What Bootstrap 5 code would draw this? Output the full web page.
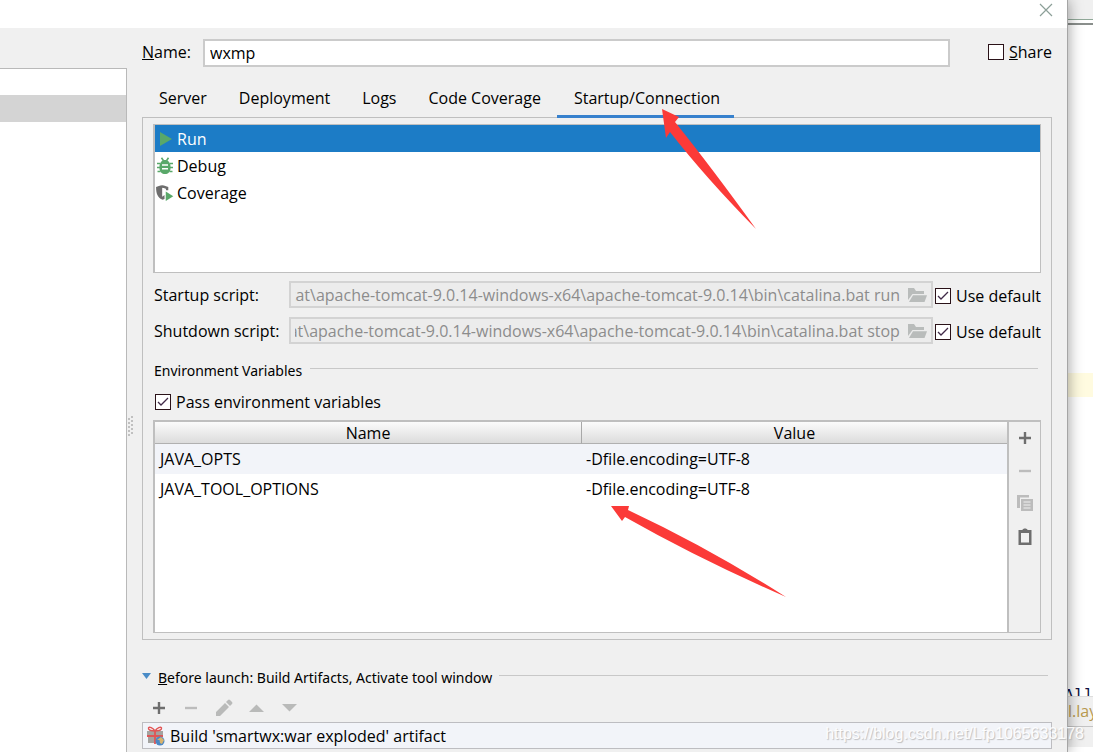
<!DOCTYPE html>
<html lang="en">
<head>
<meta charset="utf-8">
<meta name="viewport" content="width=device-width, initial-scale=1">
<title>Run/Debug Configurations</title>
<link href="https://cdn.jsdelivr.net/npm/bootstrap@5.3.0/dist/css/bootstrap.min.css" rel="stylesheet">
<style>
:root { --face:#f0f0f0; --edge:#bfbfbf; --blue:#1c7cc6; }
body { font-family:"Open Sans","Noto Sans CJK SC",sans-serif; font-size:16px; line-height:20px; color:#000; background:#fff; }
.window { min-height:100vh; overflow:hidden; }
.dialog { background:var(--face); z-index:1; box-shadow:0 0 14px rgba(0,0,0,.4); border-right:1px solid #a5a5a5; }
.titlebar { height:28px; background:#fff; padding-right:14px; }
.close-btn { border:0; background:none; padding:0; height:16px; line-height:1; }
.config-tree { width:127px; margin-top:40px; background:#fff; border:1px solid #b9b9b9; border-width:1px 1px 0 0; padding-top:26px; }
.tree-selected { height:27px; background:#d4d4d4; }
.splitter { width:15px; }
.pane { padding:11px 15px 0 0; min-width:0; }
.name-row { height:28px; }
.name-row label { padding-bottom:2px; }
.label-name { width:61px; }
.field { font-size:16px; line-height:20px; border:2px solid #cbcbcb; border-radius:0; background:#fff; color:#000; height:28px; padding:0 5px; min-width:0; }
.tick { appearance:none; width:16px; height:16px; margin:0; border:1px solid #2a1218; background:#fff; flex:none; }
.tick:checked { background:#fff url("data:image/svg+xml,%3Csvg xmlns='http://www.w3.org/2000/svg' viewBox='0 0 14 14'%3E%3Cpath d='M2 7l3 3 7-7' fill='none' stroke='%23402a48' stroke-width='1.3'/%3E%3C/svg%3E"); }
.share { margin-left:38px; gap:5px; }
.tabs { margin-top:17px; padding-left:1px; }
.tab-item { border:0; background:none; color:#000; padding:4px 16px 7px; height:34px; line-height:20px; border-bottom:3px solid transparent; }
.tab-item.active { border-color:#3781cd; padding:4px 14px 7px 17px; position:relative; }
.panel { border:1px solid var(--edge); margin-top:-1px; padding:6px 10px; }
.runners { background:#fff; border:1px solid var(--edge); border-left-width:2px; height:149px; }
.runner { height:27px; padding-left:2px; gap:4px; border:0; background:none; text-align:left; color:#000; }
.runner.active { background:var(--blue); color:#fff; }
.scripts { margin-top:8px; gap:9px; }
.script-label { width:136px; padding-left:1px; }
.script-box { height:27px; border:2px solid #d3d3d3; background:#ececec; padding-right:4px; min-width:0; }
.script-box input { border:0; background:none; color:#8c8c8c; padding:0; margin-left:4px; min-width:0; font-size:16px; line-height:20px; }
.script-box button, .tool { border:0; background:none; padding:0; line-height:1; }
.default { margin-left:2px; gap:5px; padding-top:2px; }
.section { font-family:"Noto Sans","Open Sans",sans-serif; font-size:14px; line-height:20px; gap:8px; }
.section .rule { border-top:1px solid #c8c8c8; margin-bottom:5px; }
.env-title { margin-top:17px; padding:0 3px 0 1px; }
.pass { margin-top:11px; gap:5px; padding-left:2px; }
.env-box { border:2px solid var(--edge); border-right-width:1px; border-bottom-width:1px; margin-top:8px; height:213px; }
.env-table { width:100%; table-layout:fixed; border-collapse:separate; border-spacing:0; }
.env-table th { height:22px; font-weight:400; text-align:center; background:linear-gradient(#fbfbfb,#dcdcdc); border-bottom:1px solid #b0b0b0; padding:0; line-height:20px; }
.env-table th + th { border-left:1px solid #a8a8a8; }
.env-table td { height:30px; padding:0 5px; }
.env-table tbody tr:first-child { background:#f2f4f9; }
.env-tools { width:33px; border-left:2px solid var(--edge); padding-top:6px; gap:15px; }
.tool { width:18px; height:18px; flex:none; }
.launch-title { margin-top:28px; padding-right:4px; gap:7px; }
.launch-tools { margin-top:10px; gap:15px; padding-left:8px; }
.tasks { margin-top:6px; margin-bottom:2px; border:1px solid #bdbdc1; background:#f2f4f9; height:27px; padding-left:3px; gap:4px; }
.behind { width:25px; background:#fff; }
.behind-bar { height:20px; background:var(--face); border-bottom:1px solid #90a898; }
.behind-line { height:5px; border-bottom:2px solid #8a8f8c; }
.behind-caret { height:24px; margin-top:348px; background:#fffbe0; }
.behind-code { height:10px; margin-top:289px; font:16px/20px "Liberation Mono",monospace; color:#101040; overflow:hidden; }
.behind-crumb { height:31px; background:#f0f0f0; border-top:1px solid #ddd; border-bottom:1px solid #c4c4c4; color:#b8994f; line-height:29px; overflow:hidden; white-space:nowrap; }
.behind-code span { margin-left:-4px; }
.annot { position:absolute; z-index:3; pointer-events:none; }
.annot-a { left:660px; top:108px; }
.annot-b { left:609px; top:505px; }
.watermark { position:absolute; z-index:3; right:9px; bottom:8px; font-family:"Liberation Sans",sans-serif; color:#fff; text-shadow:1px 1px 1px #b5b5b5; opacity:.85; }
</style>
<script src="https://cdn.jsdelivr.net/npm/bootstrap@5.3.0/dist/js/bootstrap.bundle.min.js"></script>
</head>
<body>
<div class="window d-flex position-relative">
  <div class="dialog d-flex flex-column flex-grow-1 position-relative">
    <div class="titlebar d-flex justify-content-end">
      <button class="close-btn" aria-label="Close"><svg width="14" height="14" viewBox="0 0 14 14"><path d="M1 1l12 12M13 1L1 13" stroke="#8c9f98" stroke-width="1.2"/></svg></button>
    </div>
    <div class="d-flex flex-grow-1">
      <aside class="config-tree flex-shrink-0"><div class="tree-selected"></div></aside>
      <div class="splitter flex-shrink-0 d-flex align-items-center">
        <svg class="mt-5 pt-4" width="7" height="44" viewBox="0 0 7 20"><g fill="#c0c0c0"><path d="M1 2h2v2h-2zM1 6h2v2h-2zM1 10h2v2h-2zM1 14h2v2h-2zM1 18h2v2h-2zM4 0h2v2h-2zM4 4h2v2h-2zM4 8h2v2h-2zM4 12h2v2h-2zM4 16h2v2h-2z"/></g></svg>
      </div>
      <main class="pane flex-grow-1">
        <div class="name-row d-flex align-items-center">
          <label class="label-name" for="cfgName"><u>N</u>ame:</label>
          <input class="field flex-grow-1" id="cfgName" type="text" value="wxmp">
          <label class="share d-flex align-items-center"><input class="tick" type="checkbox"><span><u>S</u>hare</span></label>
        </div>
        <div class="tabs d-flex" role="tablist">
          <button class="tab-item" role="tab">Server</button>
          <button class="tab-item" role="tab">Deployment</button>
          <button class="tab-item" role="tab">Logs</button>
          <button class="tab-item" role="tab">Code Coverage</button>
          <button class="tab-item active" role="tab">Startup/Connection</button>
        </div>
        <section class="panel">
          <div class="runners d-flex flex-column">
            <button class="runner active d-flex align-items-center"><svg width="16" height="16" viewBox="0 0 16 16"><path d="M3 1l12 7-12 7z" fill="#59a869"/></svg>Run</button>
            <button class="runner d-flex align-items-center"><svg width="16" height="18" viewBox="0 0 16 18"><g fill="none" stroke="#59a869" stroke-width="1.6"><path d="M4.5 0.8l2 3M11.500 .8l-2 3M0 6.500h3M13 6.500h3M0 10.500h3M13 10.500h3M0.500 14.500h3M12.500 14.500h3"/></g><path d="M8 3c3 0 5.500 2.500 5.500 6.500v2c0 3.500-2.500 5.500-5.500 5.500s-5.500-2-5.500-5.500v-2C2.500 5.500 5 3 8 3z" fill="#59a869"/><path d="M5 8h6M5 11.800h6" stroke="#fff" stroke-width="1.5"/></svg>Debug</button>
            <button class="runner d-flex align-items-center"><svg width="16" height="18" viewBox="1 0 17 18" overflow="visible"><path d="M0 2.500C2 2 4 1 6.500 .8 9 1 11 2 13 2.500V6H10.500V4.500C9 4.500 7.500 4 6.500 3.500V13l2.500-2v4.500L7 16.300C2 13.500 0 10.500 0 2.500z" fill="#6e6e6e"/><path d="M10.300 7.500l8 5-8 5z" fill="#59a869"/></svg>Coverage</button>
          </div>
          <div class="scripts d-flex flex-column">
            <div class="d-flex">
              <label class="script-label pt-1" for="startScript">Startup script:</label>
              <div class="script-box d-flex align-items-center flex-grow-1">
                <input class="flex-grow-1 tail" id="startScript" type="text" disabled value="mcat\apache-tomcat-9.0.14-windows-x64\apache-tomcat-9.0.14\bin\catalina.bat run">
                <button class="ms-2" aria-label="Browse"><svg width="19" height="15" viewBox="0 0 19 15"><path d="M0 0h6l2 3h8v3H4.500L0 12z" fill="#b9bcbb"/><path d="M5 7.300h14L16.500 14H1z" fill="#b9bcbb"/></svg></button>
              </div>
              <label class="default d-flex align-items-center"><input class="tick" type="checkbox" checked><span>Use default</span></label>
            </div>
            <div class="d-flex">
              <label class="script-label pt-1" for="stopScript">Shutdown script:</label>
              <div class="script-box d-flex align-items-center flex-grow-1">
                <input class="flex-grow-1 tail" id="stopScript" type="text" disabled value="cat\apache-tomcat-9.0.14-windows-x64\apache-tomcat-9.0.14\bin\catalina.bat stop">
                <button class="ms-2" aria-label="Browse"><svg width="19" height="15" viewBox="0 0 19 15"><path d="M0 0h6l2 3h8v3H4.500L0 12z" fill="#b9bcbb"/><path d="M5 7.300h14L16.500 14H1z" fill="#b9bcbb"/></svg></button>
              </div>
              <label class="default d-flex align-items-center"><input class="tick" type="checkbox" checked><span>Use default</span></label>
            </div>
          </div>
          <div class="env-title section d-flex align-items-center"><span>Environment Variables</span><span class="rule flex-grow-1"></span></div>
          <label class="pass d-flex align-items-center"><input class="tick" type="checkbox" checked><span>Pass environment variables</span></label>
          <div class="env-box d-flex">
            <div class="flex-grow-1 bg-white">
              <table class="env-table">
                <thead><tr><th>Name</th><th>Value</th></tr></thead>
                <tbody>
                  <tr><td>JAVA_OPTS</td><td>-Dfile.encoding=UTF-8</td></tr>
                  <tr><td>JAVA_TOOL_OPTIONS</td><td>-Dfile.encoding=UTF-8</td></tr>
                </tbody>
              </table>
            </div>
            <div class="env-tools flex-shrink-0 d-flex flex-column align-items-center">
              <button class="tool" aria-label="Add"><svg width="18" height="18" viewBox="0 0 18 18"><path d="M9 3v12M3 9h12" stroke="#6e6e6e" stroke-width="2.400"/></svg></button>
              <button class="tool" aria-label="Remove"><svg width="18" height="18" viewBox="0 0 18 18"><path d="M3 9h12" stroke="#bcbcbc" stroke-width="2.400"/></svg></button>
              <button class="tool" aria-label="Copy"><svg width="18" height="18" viewBox="0 0 18 18"><path d="M1 0h12v2.500H4V13H1z" fill="#bcbcbc"/><path fill-rule="evenodd" d="M5 4h12v12H5zM7.500 6.500v1h7v-1zM7.500 9.500v1h7v-1zM7.500 12.500v1h7v-1z" fill="#bcbcbc"/></svg></button>
              <button class="tool" aria-label="Paste"><svg width="18" height="18" viewBox="0 0 18 18"><path fill-rule="evenodd" d="M2.500 2H6.500C6.500 0 11.500 0 11.500 2H15.500V17H2.500zM5 5V14.500h8V5z" fill="#6e6e6e"/></svg></button>
            </div>
          </div>
        </section>
        <div class="launch-title section d-flex align-items-center"><svg class="mb-1" width="9" height="6" viewBox="0 0 9 6"><path d="M0 0h9L4.500 6z" fill="#4a8cc7"/></svg><span><u>B</u>efore launch: Build Artifacts, Activate tool window</span><span class="rule flex-grow-1"></span></div>
        <div class="launch-tools d-flex">
          <button class="tool" aria-label="Add"><svg width="18" height="18" viewBox="0 0 18 18"><path d="M9 3v12M3 9h12" stroke="#6e6e6e" stroke-width="2.400"/></svg></button>
          <button class="tool" aria-label="Remove"><svg width="18" height="18" viewBox="0 0 18 18"><path d="M2 9h12" stroke="#bcbcbc" stroke-width="2.400"/></svg></button>
          <button class="tool" aria-label="Edit"><svg width="18" height="18" viewBox="0 0 18 18"><path d="M0 17v-4l9-9 4 4-9 9zM10 3l2-2q1-1 2 0l2 2q1 1 0 2l-2 2z" fill="#b9bab9"/></svg></button>
          <button class="tool" aria-label="Up"><svg width="18" height="18" viewBox="0 0 18 18"><path d="M0 13L7.500 5.500 15 13z" fill="#b9bab9"/></svg></button>
          <button class="tool" aria-label="Down"><svg width="18" height="18" viewBox="0 0 18 18"><path d="M0 5h15L7.500 12.500z" fill="#b9bab9"/></svg></button>
        </div>
        <div class="tasks d-flex align-items-center"><svg width="20" height="20" viewBox="0 0 20 20"><path d="M1 5h16v4H1zM2 10h14v7H2z" fill="#a3a3a0"/><path d="M1 10h16M9 5v13" stroke="#e05555" stroke-width="1.800"/><path d="M9 5C7 2 3 0 2.500 2S5 5 9 5c4 0 7-1 6.500-3S11 2 9 5z" fill="#fff" stroke="#e05555" stroke-width="1.500"/><circle cx="14" cy="15" r="4.500" fill="#4b87c4"/><path d="M11 14l4-3 3 3-2 4-2-1-.500-3z" fill="#d9b36c"/></svg><span>Build 'smartwx:war exploded' artifact</span></div>
      </main>
    </div>
  </div>
  <div class="behind flex-shrink-0" aria-hidden="true">
    <div class="behind-bar"></div>
    <div class="behind-line"></div>
    <div class="behind-caret"></div>
    <div class="behind-code"><span>All</span></div>
    <div class="behind-crumb">l.lay</div>
    <div class="behind-bar border-0"></div>
  </div>
  <svg class="annot annot-a" width="100" height="124" viewBox="0 0 100 124"><path d="M2 1L19 9 15 14Q52 60 96 121Q45 69 10 24L6 30z" fill="#fb3a38"/></svg>
  <svg class="annot annot-b" width="180" height="94" viewBox="0 0 180 94"><path d="M2 1H20L19 5Q100 43 177 92Q90 54 16 12L13 16z" fill="#fb3a38"/></svg>
  <div class="watermark">https://blog.csdn.net/Lfp1065633178</div>
</div>
<script>
document.querySelectorAll('.tail').forEach(function (el) { el.scrollLeft = el.scrollWidth; });
</script>
</body>
</html>
